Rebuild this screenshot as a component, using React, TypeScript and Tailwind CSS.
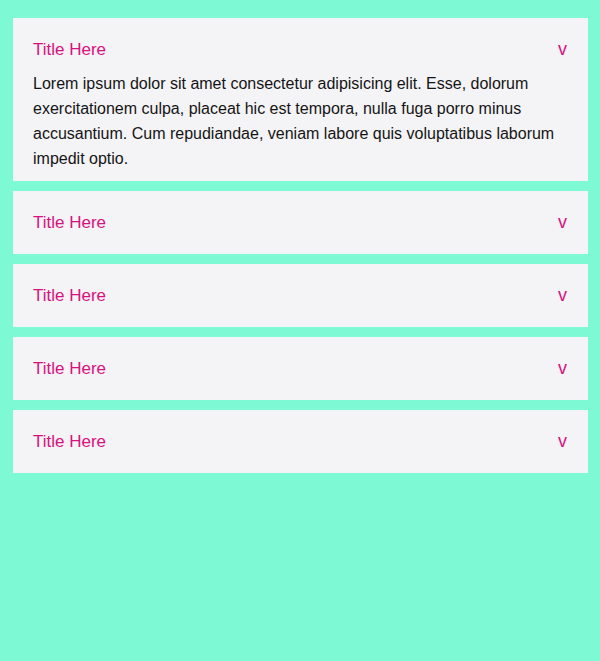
import { useState } from "react";

const items = [
  {
    title: "Title Here",
    body: "Lorem ipsum dolor sit amet consectetur adipisicing elit. Esse, dolorum exercitationem culpa, placeat hic est tempora, nulla fuga porro minus accusantium. Cum repudiandae, veniam labore quis voluptatibus laborum impedit optio.",
  },
  { title: "Title Here", body: "Lorem ipsum dolor sit amet consectetur adipisicing elit." },
  { title: "Title Here", body: "Lorem ipsum dolor sit amet consectetur adipisicing elit." },
  { title: "Title Here", body: "Lorem ipsum dolor sit amet consectetur adipisicing elit." },
  { title: "Title Here", body: "Lorem ipsum dolor sit amet consectetur adipisicing elit." },
];

export default function App() {
  const [open, setOpen] = useState(0);

  return (
    <div className="min-h-screen bg-[#7df9d4] pt-[18px] pl-[13px] pr-[12px] font-['Liberation_Sans',Arial,sans-serif]">
      <div className="flex flex-col gap-[10px]">
        {items.map((item, i) => (
          <div key={i} className="bg-[#f4f3f6]">
            <button
              type="button"
              onClick={() => setOpen(open === i ? -1 : i)}
              className="flex w-full items-center justify-between px-5 py-5 text-left text-[17px] leading-[23px] text-[#d7127f]"
            >
              <span>{item.title}</span>
              <span className="mr-[1px] text-[18px]">v</span>
            </button>
            {open === i && (
              <p className="-mt-[10px] px-5 pb-[10px] text-[16px] leading-[25px] text-[#151515]">
                {item.body}
              </p>
            )}
          </div>
        ))}
      </div>
    </div>
  );
}
